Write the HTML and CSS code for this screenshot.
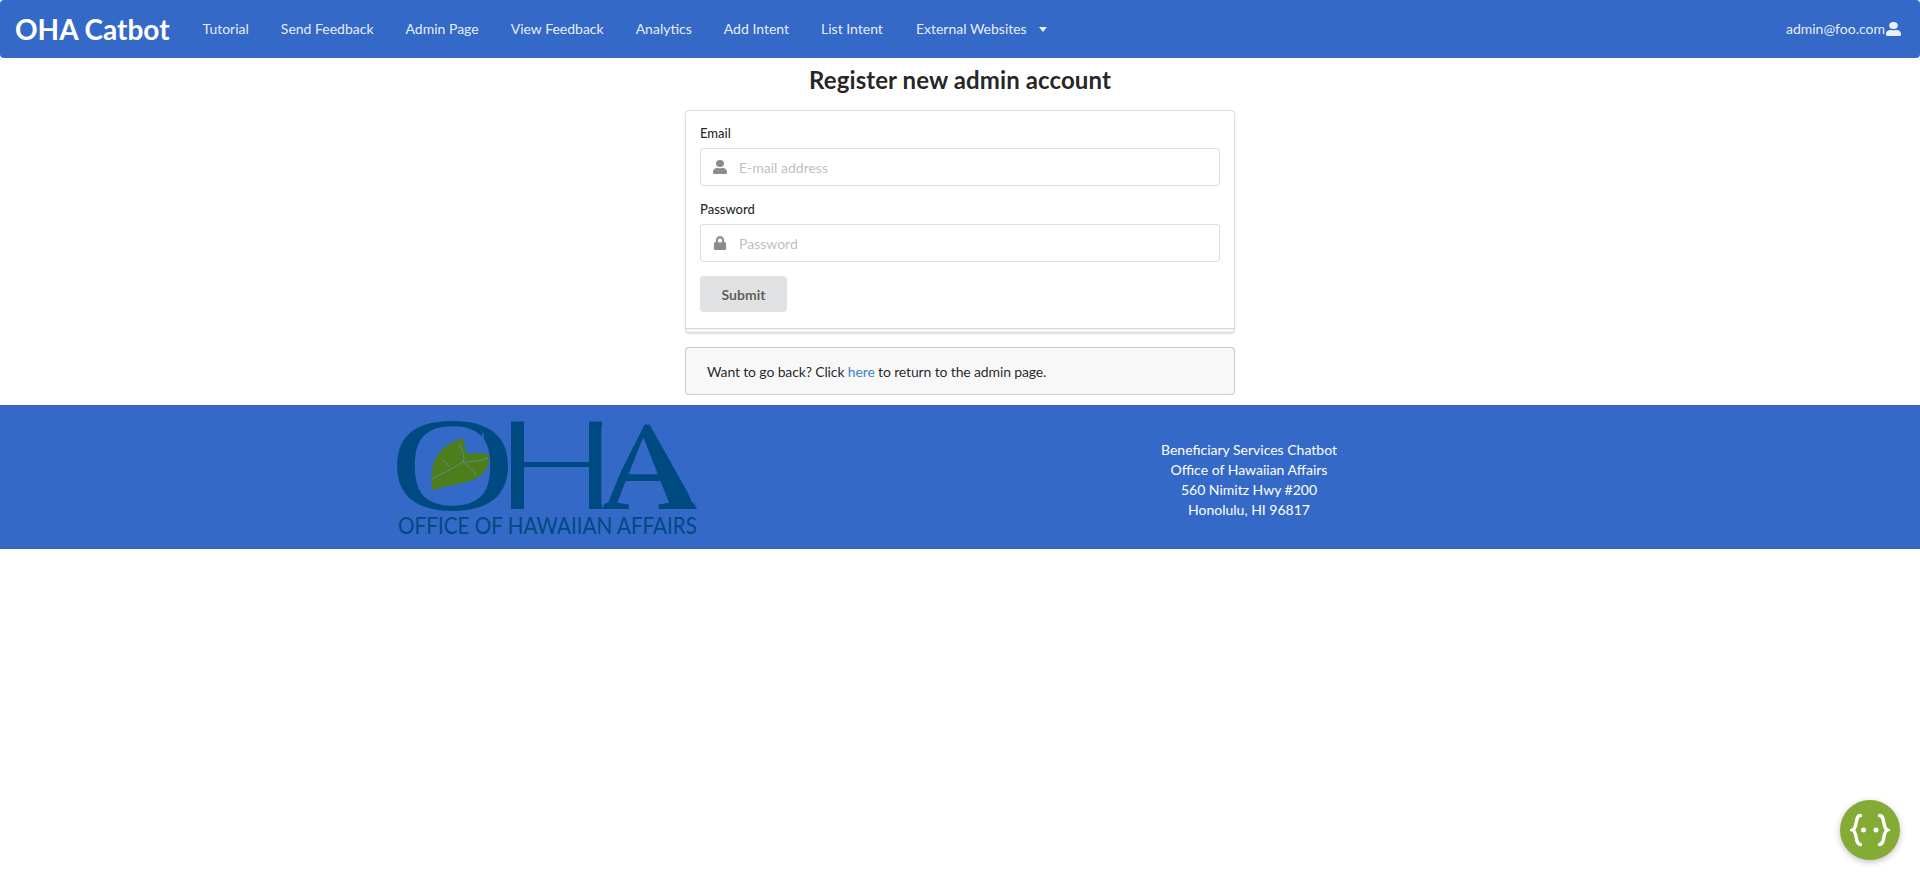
FILE: index.html
```html
<!DOCTYPE html>
<html lang="en">
<head>
<meta charset="utf-8">
<title>OHA Catbot</title>
<link rel="stylesheet" href="styles.css">
</head>
<body>
<header class="menu">
  <a class="brand" href="#">OHA Catbot</a>
  <a class="item" href="#">Tutorial</a>
  <a class="item" href="#">Send Feedback</a>
  <a class="item" href="#">Admin Page</a>
  <a class="item" href="#">View Feedback</a>
  <a class="item" href="#">Analytics</a>
  <a class="item" href="#">Add Intent</a>
  <a class="item" href="#">List Intent</a>
  <a class="item dropdown" href="#">External Websites<span class="caret"></span></a>
  <a class="item account" href="#">admin@foo.com<svg class="account-icon" viewBox="0 0 448 512" preserveAspectRatio="none"><path fill="currentColor" d="M224 256a128 128 0 1 0 0-256 128 128 0 0 0 0 256zm90 32h-17a174 174 0 0 1-146 0h-17C60 288 0 348 0 422v42c0 26 22 48 48 48h352c26 0 48-22 48-48v-42c0-74-60-134-134-134z"/></svg></a>
</header>
<main class="main">
  <h2 class="title">Register new admin account</h2>
  <form class="card">
    <label class="label" for="email">Email</label>
    <div class="input-wrap">
      <svg class="input-icon" viewBox="0 0 448 512" preserveAspectRatio="none"><path fill="currentColor" d="M224 256a128 128 0 1 0 0-256 128 128 0 0 0 0 256zm90 32h-17a174 174 0 0 1-146 0h-17C60 288 0 348 0 422v42c0 26 22 48 48 48h352c26 0 48-22 48-48v-42c0-74-60-134-134-134z"/></svg>
      <input class="input" id="email" type="text" placeholder="E-mail address">
    </div>
    <label class="label" for="password">Password</label>
    <div class="input-wrap">
      <svg class="input-icon" viewBox="0 0 448 512"><path fill="currentColor" d="M400 224h-24v-72C376 68 308 0 224 0S72 68 72 152v72H48c-26 0-48 22-48 48v192c0 26 22 48 48 48h352c26 0 48-22 48-48V272c0-26-22-48-48-48zm-104 0H152v-72c0-40 32-72 72-72s72 32 72 72v72z"/></svg>
      <input class="input" id="password" type="password" placeholder="Password">
    </div>
    <button class="submit" type="button">Submit</button>
  </form>
  <div class="message">Want to go back? Click <a class="link" href="#">here</a> to return to the admin page.</div>
</main>
<footer class="footer">
  <svg class="logo" viewBox="-10 0 320 122" role="img" aria-label="Office of Hawaiian Affairs logo">
    <defs>
      <clipPath id="h-clip">
        <rect x="114" y="4" width="13" height="88"/>
        <rect x="192" y="4" width="13" height="88"/>
        <rect x="120" y="45" width="80" height="5"/>
      </clipPath>
      <clipPath id="a-clip">
        <polygon points="205,92 250,3 300,92"/>
      </clipPath>
    </defs>
    <g class="logo-letters">
      <text x="-7" y="93" font-size="134" textLength="125" lengthAdjust="spacingAndGlyphs">O</text>
      <g clip-path="url(#h-clip)"><text x="93" y="92" font-size="134" textLength="132" lengthAdjust="spacingAndGlyphs">H</text></g>
      <g clip-path="url(#a-clip)"><text class="logo-a" x="203" y="92" font-size="128" textLength="100" lengthAdjust="spacingAndGlyphs">A</text></g>
    </g>
    <path class="leaf-stem" d="M71 35C80 33 87 27 86 16"/>
    <path class="leaf" d="M36 74C33 60 34 46 43 35 50 27 58 24 66 21 68 28 68 33 71 37 78 36 86 35 92 38 93 45 91 52 84 58 72 68 52 66 36 74Z"/>
    <path class="leaf-vein" d="M35 62C46 56 55 52 66 45M66 45C75 45 84 44 91 41M66 45C72 50 76 53 79 58M66 45C69 38 63 32 63 27M52 50C50 46 47 44 44 41"/>
    <text class="logo-sub" x="1" y="117" font-size="24" textLength="299" lengthAdjust="spacingAndGlyphs">OFFICE OF HAWAIIAN AFFAIRS</text>
  </svg>
  <address class="address">
    <span>Beneficiary Services Chatbot</span>
    <span>Office of Hawaiian Affairs</span>
    <span>560 Nimitz Hwy #200</span>
    <span>Honolulu, HI 96817</span>
  </address>
</footer>
<button class="widget" type="button" aria-label="Open chat">
  <svg viewBox="0 0 40 40" class="widget-icon"><path d="M10.5 5.5C4.5 5.5 8 18 2.5 20 8 22 4.5 34.5 10.5 34.5M29.5 5.5C35.5 5.5 32 18 37.5 20 32 22 35.5 34.5 29.5 34.5"/><circle cx="13.5" cy="20" r="2.5"/><circle cx="26" cy="20" r="2.5"/></svg>
</button>
</body>
</html>
```

FILE: styles.css
```css
* { box-sizing: border-box; }
html, body { margin: 0; padding: 0; }
body {
  min-height: 880px;
  background: #fff;
  color: rgba(0,0,0,.87);
  font-family: Lato, "Helvetica Neue", Arial, sans-serif;
  font-size: 14px;
  line-height: 20px;
}
a { text-decoration: none; color: inherit; }

.menu {
  display: flex;
  align-items: center;
  height: 58px;
  background: #3469c8;
  border-radius: 4px;
  color: rgba(255,255,255,.9);
}
.brand {
  padding: 0 17px 0 15px;
  color: #fff;
  font-size: 28px;
  line-height: 34px;
  font-weight: 700;
}
.item { display: flex; align-items: center; padding: 0 16px; }
.dropdown { margin-left: 1px; }
.caret {
  width: 0; height: 0;
  margin-left: 12px;
  border-left: 4px solid transparent;
  border-right: 4px solid transparent;
  border-top: 5px solid rgba(255,255,255,.9);
}
.account { margin-left: auto; padding-right: 19px; }
.account-icon { width: 15px; height: 14px; margin-left: 1px; color: rgba(255,255,255,.9); }

.main { width: 550px; margin: 0 auto; }
.title {
  margin: 0;
  padding: 6px 0 15px;
  text-align: center;
  font-size: 24px;
  line-height: 31px;
  font-weight: 700;
  letter-spacing: .1px;
}
.card {
  position: relative;
  height: 223px;
  padding: 13px 14px 0;
  border: 1px solid rgba(34,36,38,.15);
  border-radius: 4px;
  box-shadow: 0 1px 2px rgba(34,36,38,.15);
}
.card::after {
  content: "";
  position: absolute;
  left: 0; right: 0; bottom: 0;
  height: 3px;
  border-top: 1px solid rgba(34,36,38,.15);
  background: rgba(0,0,0,.03);
}
.label {
  display: block;
  margin-bottom: 6px;
  font-size: 13px;
  line-height: 18px;
  font-weight: 500;
}
.input-wrap { position: relative; margin-bottom: 14px; }
.input-icon {
  position: absolute;
  left: 13px; top: 12px;
  width: 14px; height: 14px;
  color: rgba(0,0,0,.45);
}
.input {
  display: block;
  width: 100%;
  height: 38px;
  padding: 0 14px 0 38px;
  border: 1px solid rgba(34,36,38,.15);
  border-radius: 4px;
  outline: 0;
  background: #fff;
  color: rgba(0,0,0,.87);
  font: 14px Lato, sans-serif;
}
.input::placeholder { color: #bfbfbf; opacity: 1; }
.submit {
  display: block;
  width: 87px;
  height: 36px;
  padding: 0;
  border: 0;
  border-radius: 4px;
  background: #e0e1e2;
  color: rgba(0,0,0,.6);
  font: 700 14px Lato, sans-serif;
}
.message {
  height: 48px;
  margin-top: 14px;
  padding: 14px 21px;
  border: 1px solid rgba(34,36,38,.22);
  border-radius: 4px;
  background: #f8f8f9;
  letter-spacing: -.14px;
}
.link { color: #4183c4; }

.footer {
  display: grid;
  grid-template-columns: 580px 576px;
  align-items: center;
  height: 144px;
  margin-top: 10px;
  padding-left: 381px;
  background: #3469c8;
  color: #fff;
}
.logo { display: block; width: 320px; height: 122px; margin-top: 2px; overflow: visible; margin-left: 6px; }
.logo-letters text { font-family: "Liberation Serif", serif; fill: #004a82; }
.logo-letters .logo-a { font-weight: 700; }
.logo-sub { font-family: Lato, sans-serif; fill: #004a82; }
.leaf { fill: #4e7d1b; }
.leaf-stem { fill: none; stroke: #3469c8; stroke-width: 1.5; }
.leaf-vein { fill: none; stroke: #5f94a8; stroke-width: .7; }
.address { display: flex; flex-direction: column; align-items: center; font-style: normal; margin-top: 5px; }

.widget {
  position: fixed;
  right: 20px; bottom: 20px;
  width: 60px; height: 60px;
  padding: 10px;
  border: 0;
  border-radius: 50%;
  background: #84ab33;
  box-shadow: 0 2px 6px rgba(0,0,0,.25);
}
.widget-icon { display: block; width: 40px; height: 40px; }
.widget-icon path { fill: none; stroke: #fff; stroke-width: 3.4; stroke-linecap: round; }
.widget-icon circle { fill: #fff; }
```
